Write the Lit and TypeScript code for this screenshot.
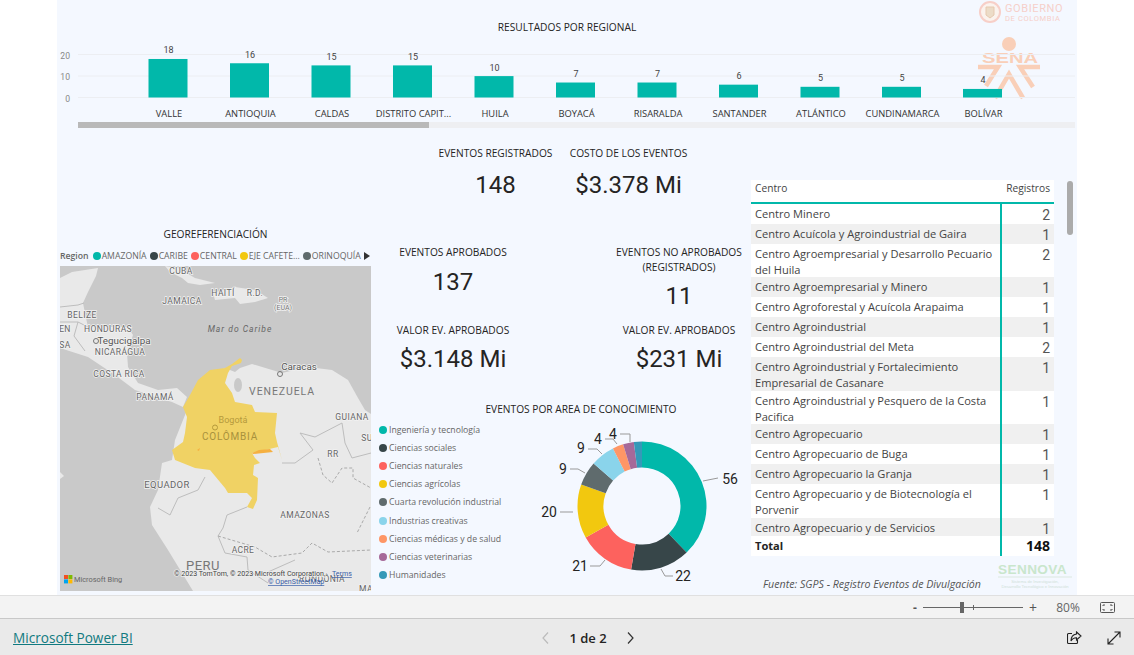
import { LitElement, html, css, svg } from 'lit';
import { customElement } from 'lit/decorators.js';

const REGIONALES: [string, number, number][] = [
  ['VALLE', 18, 168], ['ANTIOQUIA', 16, 249.5], ['CALDAS', 15, 331], ['DISTRITO CAPIT...', 15, 412.5],
  ['HUILA', 10, 494], ['BOYACÁ', 7, 575.5], ['RISARALDA', 7, 657], ['SANTANDER', 6, 738.5],
  ['ATLÁNTICO', 5, 820], ['CUNDINAMARCA', 5, 901.5], ['BOLÍVAR', 4, 982.5],
];

const AREAS: [string, number, string][] = [
  ['Ingeniería y tecnología', 56, '#01b8aa'], ['Ciencias sociales', 22, '#374649'],
  ['Ciencias naturales', 21, '#fd625e'], ['Ciencias agrícolas', 20, '#f2c80f'],
  ['Cuarta revolución industrial', 9, '#5f6b6d'], ['Industrias creativas', 9, '#8ad4eb'],
  ['Ciencias médicas y de salud', 4, '#fe9666'], ['Ciencias veterinarias', 4, '#a66999'],
  ['Humanidades', 3, '#3599b8'],
];

// etiquetas del donut: texto, x, y, guia
const DONUT_LABELS: [string, number, number, string][] = [
  ['56', 730, 478, '703,480 718,477'], ['22', 683, 575, '661,568 665,575 673,575'],
  ['21', 580, 565, '605,559 600,565 590,565'], ['20', 549, 511, '573,511 560,511'],
  ['9', 563, 468, '585,472 578,468 570,468'], ['9', 581, 447, '602,453 597,448 588,448'],
  ['4', 598, 438, '617,443 613,438 605,438'], ['4', 613, 433, '630,441 630,433 620,433'],
];

const CENTROS: [string[], number, number][] = [
  [['Centro Minero'], 2, 20],
  [['Centro Acuícola y Agroindustrial de Gaira'], 1, 20],
  [['Centro Agroempresarial y Desarrollo Pecuario', 'del Huila'], 2, 33],
  [['Centro Agroempresarial y Minero'], 1, 20],
  [['Centro Agroforestal y Acuícola Arapaima'], 1, 20],
  [['Centro Agroindustrial'], 1, 20],
  [['Centro Agroindustrial del Meta'], 2, 20],
  [['Centro Agroindustrial y Fortalecimiento', 'Empresarial de Casanare'], 1, 34],
  [['Centro Agroindustrial y Pesquero de la Costa', 'Pacifica'], 1, 33],
  [['Centro Agropecuario'], 1, 20],
  [['Centro Agropecuario de Buga'], 1, 20],
  [['Centro Agropecuario la Granja'], 1, 20],
  [['Centro Agropecuario y de Biotecnología el', 'Porvenir'], 1, 34],
  [['Centro Agropecuario y de Servicios'], 1, 18],
];

const MAP_LABELS: [string, number, number, string][] = [
  ['CUBA', 181, 271, 'm'], ['HAITÍ', 223, 293, 'm'], ['R.D.', 255, 293, 'm'], ['JAMAICA', 182, 301, 'm'],
  ['PR', 283, 299, 's'], ['(EUA)', 283, 307, 's'], ['BELIZE', 82, 315, 'm'], ['HONDURAS', 108, 329, 'm'],
  ['EN', 65, 329, 'm'], ['SA', 65, 345, 'm'], ['NICARÁGUA', 120, 352, 'm'], ['COSTA RICA', 119, 374, 'm'],
  ['PANAMÁ', 155, 397, 'm'], ['GUIANA', 352, 417, 'm'], ['SU', 367, 438, 'm'], ['RR', 333, 454, 'm'],
  ['EQUADOR', 167, 485, 'l'], ['AMAZONAS', 305, 515, 'm'], ['ACRE', 243, 550, 'm'], ['RONDÔNIA', 322, 579, 'm'],
  ['MA', 366, 589, 'm'], ['VENEZUELA', 282, 392, 'xl'], ['PERU', 203, 567, 'xxl'], ['Caracas', 299, 367, 'c'],
  ['Tegucigalpa', 124, 341, 'c'],
];

const COLOMBIA = '242,360 241,363 232,366 228,373 225,383 232,393 235,402 252,405 255,412 277,413 275,433 277,442 282,460 278,447 252,453 255,458 260,463 254,465 253,475 258,478 257,500 253,509 247,507 252,498 247,493 228,493 225,488 210,470 195,468 175,460 172,450 183,442 185,433 187,417 183,407 190,395 198,380 210,370 225,368 232,364 240,358';
const CENTROAMERICA = '60,278 72,272 85,270 98,268 96,276 88,292 83,303 86,318 88,327 128,327 133,335 127,353 128,367 138,383 158,390 177,388 187,397 183,407 172,402 155,397 135,390 115,375 88,357 60,348';
const SURAMERICA = '225,368 235,372 240,368 252,364 282,373 308,367 332,370 348,380 358,398 365,410 371,414 371,591 193,591 168,550 152,525 150,507 158,490 162,463 172,460 175,440 187,410 200,380';

function arc(cx: number, cy: number, r0: number, r1: number, a0: number, a1: number) {
  const p = (r: number, a: number) => `${(cx + r * Math.sin(a)).toFixed(2)} ${(cy - r * Math.cos(a)).toFixed(2)}`;
  const big = a1 - a0 > Math.PI ? 1 : 0;
  return `M${p(r1, a0)}A${r1} ${r1} 0 ${big} 1 ${p(r1, a1)}L${p(r0, a1)}A${r0} ${r0} 0 ${big} 0 ${p(r0, a0)}Z`;
}

@customElement('app-root')
export class AppRoot extends LitElement {
  static styles = css`
    :host {
      display: flex;
      flex-direction: column;
      width: 1134px;
      height: 655px;
      overflow: hidden;
      background: #fff;
      font-family: 'Open Sans', 'Noto Sans', sans-serif;
      color: #252423;
    }
    svg { display: block; }
    .canvas {
      width: 1020px;
      height: 595px;
      margin-left: 57px;
      background: #f4f8ff;
      flex: none;
      position: relative;
    }
    .chart-title { font-size: 10.2px; fill: #252423; text-anchor: middle; }
    .chart-cat { font-size: 9.35px; fill: #333; text-anchor: middle; }
    .chart-val { font-size: 9px; fill: #444; text-anchor: middle; font-family: Roboto, sans-serif; }
    .chart-axis { font-size: 8.6px; fill: #888; text-anchor: end; font-family: Roboto, sans-serif; }
    .gob { font-size: 11px; fill: #f6cfc9; letter-spacing: .6px; font-family: Roboto, sans-serif; }
    .gob2 { font-size: 7.6px; fill: #f6cfc9; letter-spacing: .6px; font-family: Roboto, sans-serif; }
    .sena { font-size: 14px; font-weight: 700; fill: #f9cfb8; font-family: 'Liberation Sans', sans-serif; }
    .hscroll { margin-left: 21px; width: 997px; height: 6px; background: #eeeff2; }
    .hscroll div { width: 351px; height: 6px; background: #b9b9b9; }

    .body {
      display: grid;
      grid-template-columns: 311px 380px 303px;
      margin-left: 3px;
      height: 467px;
    }
    .geo { display: flex; flex-direction: column; padding-top: 99px; }
    .geo-title { font-size: 10.2px; text-align: center; line-height: 14px; }
    .geo-legend {
      display: flex;
      align-items: center;
      height: 15px;
      margin-top: 7px;
      margin-bottom: 3px;
      font-size: 8.7px;
      color: #666;
      white-space: nowrap;
    }
    .geo-legend b { font-weight: 600; margin-right: 1px; }
    .geo-legend i { width: 8px; height: 8px; border-radius: 50%; margin: 0 1px 0 3px; flex: none; }
    .geo-legend em { font-style: normal; width: 0; height: 0; margin-left: 3px; border: 4px solid transparent; border-left: 6px solid #333; border-right: 0; }
    .m { font: 8.5px Roboto, sans-serif; letter-spacing: .4px; fill: #666; text-anchor: middle; paint-order: stroke; stroke: #f2f2f2; stroke-width: 1.5px; }
    .s { font: 7px Roboto, sans-serif; fill: #777; text-anchor: middle; paint-order: stroke; stroke: #f2f2f2; stroke-width: 1.5px; }
    .l { font: 9.5px Roboto, sans-serif; letter-spacing: .4px; fill: #666; text-anchor: middle; paint-order: stroke; stroke: #f2f2f2; stroke-width: 1.5px; }
    .xl { font: 10.5px Roboto, sans-serif; letter-spacing: .9px; fill: #777; text-anchor: middle; }
    .xxl { font: 13px Roboto, sans-serif; letter-spacing: .5px; fill: #777; text-anchor: middle; }
    .c { font: 9.8px Roboto, sans-serif; fill: #555; text-anchor: middle; paint-order: stroke; stroke: #f2f2f2; stroke-width: 1.5px; }
    .sea-name { font: italic 8.5px Roboto, sans-serif; letter-spacing: 1px; fill: #666; text-anchor: middle; }
    .col-name { font: 9px Roboto, sans-serif; fill: #b59a3c; text-anchor: middle; }
    .col-big { font: 10px Roboto, sans-serif; letter-spacing: .8px; fill: #a8913c; text-anchor: middle; }
    .attr { font: 7.05px Roboto, sans-serif; fill: #444; paint-order: stroke; stroke: #eee; stroke-width: 1.5px; }
    .attr-link { font: 7.05px Roboto, sans-serif; fill: #3a5fa8; text-decoration: underline; }
    .bing { font: 7.4px Roboto, sans-serif; fill: #666; }

    .mid { display: flex; flex-direction: column; padding-top: 18px; }
    .kpi { text-align: center; }
    .kpi-label { font-size: 10.2px; line-height: 15px; color: #252423; }
    .kpi-value { font: 24px/30px Roboto, sans-serif; color: #252423; }
    .kpis-top { display: grid; grid-template-columns: 133px 133px; justify-content: center; padding-left: 2px; height: 99px; }
    .kpis-top .kpi-value { margin-top: 9px; }
    .kpis { display: grid; grid-template-columns: 164px 1fr 144px; }
    .kpis.a { height: 78px; }
    .kpis.a .kpi-value { margin-top: 7px; }
    .kpis.a .two .kpi-value { margin-top: 6px; }
    .kpis.b { height: 79px; }
    .kpis.b .kpi-value { margin-top: 6px; }
    .donut-title { font-size: 10.2px; line-height: 14px; text-align: center; padding-left: 40px; }
    .donut-row { display: flex; align-items: flex-start; }
    .donut-row svg { margin-top: 5px; }
    .donut-legend { list-style: none; margin: 5px 0 0 8px; padding: 0; width: 151px; flex: none; }
    .donut-legend li { display: flex; align-items: center; height: 18.1px; font-size: 8.7px; color: #666; white-space: nowrap; }
    .donut-legend i { width: 8px; height: 8px; border-radius: 50%; margin-right: 2px; flex: none; }
    .donut-num { font: 14px Roboto, sans-serif; fill: #252423; text-anchor: middle; dominant-baseline: central; }

    .right { display: flex; flex-direction: column; padding-top: 52px; }
    .table { width: 303px; background: #fff; font-size: 11.1px; color: #444; }
    .thead { display: flex; justify-content: space-between; height: 21px; padding: 1px 4px 0; border-bottom: 2px solid #01b8aa; font-size: 10.2px; line-height: 14px; }
    .tr { display: grid; grid-template-columns: 249px 2px 1fr; overflow: hidden; }
    .tr.alt { background: #f0f0f0; }
    .tr.plain { background: #fff; }
    .td { padding: 2px 0 0 4px; line-height: 16px; white-space: nowrap; }
    .rule { background: #01b8aa; }
    .num { font: 14px/18px Roboto, sans-serif; color: #555; text-align: right; padding: 2px 4px 0 0; }
    .total { font-weight: 700; color: #252423; }
    .total .num { font: 700 14px/18px 'Open Sans', sans-serif; color: #111; padding-top: 1px; }
    .source { font-size: 10.65px; font-style: italic; color: #555; margin: 21px 0 0 12px; white-space: nowrap; }
    .vscroll { position: absolute; left: 1010px; top: 181px; width: 6px; height: 54px; background: #ababab; border-radius: 3px; }
    .sennova { position: absolute; left: 941px; top: 559px; }
    .sen { font: 700 13.6px 'Liberation Sans', sans-serif; fill: #c9e6cc; letter-spacing: .4px; }
    .sen2 { font: 4.2px 'Liberation Sans', sans-serif; fill: #cfe0d8; text-anchor: middle; }

    .toolbar {
      flex: none;
      height: 22px;
      box-sizing: content-box;
      background: #f3f3f3;
      border-top: 1px solid #e0e0e0;
      border-bottom: 1px solid #c8c8c8;
      display: flex;
      align-items: center;
      justify-content: flex-end;
      padding-right: 19px;
      color: #555;
      font-size: 12px;
    }
    .tb-minus { font-weight: 700; width: 8px; }
    .slider { position: relative; width: 100px; height: 1px; background: #666; margin: 0 6px 0 2px; }
    .slider .thumb { position: absolute; left: 37px; top: -5px; width: 4px; height: 11px; background: #666; }
    .slider .tick { position: absolute; left: 50px; top: -2px; width: 1px; height: 5px; background: #666; }
    .tb-plus { font-size: 14px; width: 16px; color: #555; }
    .zoom-pct { width: 30px; margin: 0 17px 0 8px; text-align: center; font-size: 12px; color: #666; }

    .footer {
      flex: 1;
      background: #eaeaea;
      display: grid;
      grid-template-columns: 540px 96px 1fr;
      align-items: center;
      padding-top: 1px;
      font-size: 14px;
    }
    .pbi { margin-left: 13px; color: #117a80; text-decoration: underline; font-size: 13.6px; }
    .pager { display: flex; align-items: center; justify-content: space-between; font-weight: 600; font-size: 13px; color: #252423; }
    .actions { display: flex; justify-content: flex-end; gap: 25px; padding-right: 13px; }
  `;

  private chart() {
    const base = 97.5, unit = 2.14;
    return html`<svg width="1020" height="122" viewBox="57 0 1020 122">
      <text class="chart-title" x="567" y="31">RESULTADOS POR REGIONAL</text>
      <circle cx="990" cy="12" r="10" fill="#fbf3ee" stroke="#f7cfc8" stroke-width="2"></circle>
      <path d="M986 7h8v8l-4 3-4-3z" fill="#ecdcc8" stroke="#e6c9b0"></path>
      <text class="gob" x="1005" y="12">GOBIERNO</text>
      <text class="gob2" x="1005" y="21">DE COLOMBIA</text>
      <circle cx="1009" cy="44" r="7" fill="#f9cfb8"></circle>
      <text class="sena" x="982" y="63" textLength="56" lengthAdjust="spacingAndGlyphs">SENA</text>
      <g fill="none" stroke="#f9cfb8" stroke-width="4.5">
        <path d="M978 67h20l-12 19M1040 67h-20l13 20"></path>
        <path d="M995 98l14-24 14 24"></path>
      </g>
      ${[54.5, 76, 97.5].map(y => svg`<line x1="78" x2="1075" y1=${y} y2=${y} stroke="#eceef2"></line>`)}
      <text class="chart-axis" x="70" y="59">20</text>
      <text class="chart-axis" x="70" y="80">10</text>
      <text class="chart-axis" x="70" y="102">0</text>
      ${REGIONALES.map(([name, v, cx]) => {
        const h = v * unit;
        return svg`
          <rect x=${cx - 19.5} y=${base - h} width="39" height=${h} fill="#01b8aa"></rect>
          <text class="chart-val" x=${cx + 0.5} y=${base - h - 5.5}>${v}</text>
          <text class="chart-cat" x=${cx + 1} y="117">${name}</text>`;
      })}
    </svg>`;
  }

  private map() {
    return html`<svg width="311" height="325" viewBox="60 266 311 325">
      <rect x="60" y="266" width="311" height="325" fill="#c9c9c9"></rect>
      <g fill="#e9e9e9">
        <polygon points=${CENTROAMERICA}></polygon>
        <polygon points=${SURAMERICA}></polygon>
        <polygon points="165,266 178,268 195,278 215,283 200,285 188,283 182,278 170,272"></polygon>
        <polygon points="213,293 235,287 255,290 268,298 255,302 240,304 235,298 215,300"></polygon>
        <polygon points="178,300 188,299 194,302 186,303"></polygon>
        <polygon points="278,297 288,297 289,299 279,300"></polygon>
        <polygon points="60,472 64,476 60,479"></polygon>
      </g>
      <ellipse cx="238" cy="385" rx="4" ry="7" fill="#c9c9c9"></ellipse>
      <g fill="none" stroke="#bdbdbd">
        <polyline points="60,307 78,305 84,303"></polyline>
        <polyline points="60,322 78,322 88,327"></polyline>
        <polyline points="78,322 74,336 85,351"></polyline>
        <polyline points="205,477 198,490 178,498 170,515 158,508"></polyline>
        <polyline points="247,507 227,515 223,528 218,536 225,553 247,557 248,570 268,583"></polyline>
        <polyline points="282,463 295,463 313,450 300,433 315,437 342,423 345,443 352,458 371,453"></polyline>
        <polyline points="295,560 268,572"></polyline>
      </g>
      <g fill="none" stroke="#a9a9a9" stroke-dasharray="3 2">
        <polyline points="218,536 255,547 272,557 302,553 312,543 328,552 371,550"></polyline>
        <polyline points="318,458 323,475 332,483 342,468 353,468 353,478 371,488"></polyline>
        <polyline points="370,507 357,533"></polyline>
      </g>
      <polygon points=${COLOMBIA} fill="#f0d264"></polygon>
      <path d="M252 453l7-3 11-1 3 3-20 2z" fill="#f5b041"></path>
      <path d="M197 450l3-2-1 3z" fill="#f5b041"></path>
      ${MAP_LABELS.map(([t, x, y, c]) => svg`<text class=${c} x=${x} y=${y + 3}>${t}</text>`)}
      <text class="sea-name" x="240" y="332">Mar do Caribe</text>
      <text class="col-name" x="233" y="423">Bogotá</text>
      <text class="col-big" x="230" y="440">COLÔMBIA</text>
      <circle cx="215" cy="427.5" r="2.5" fill="none" stroke="#b59a3c"></circle>
      <circle cx="96" cy="341" r="2.5" fill="none" stroke="#777"></circle>
      <circle cx="280" cy="374" r="2.5" fill="none" stroke="#777"></circle>
      <text class="attr" x="174" y="576">© 2023 TomTom, © 2023 Microsoft Corporation,</text>
      <text class="attr-link" x="332" y="576">Terms</text>
      <text class="attr-link" x="268" y="584">© OpenStreetMap</text>
      <rect x="64" y="575" width="4" height="4" fill="#f25022"></rect>
      <rect x="68.4" y="575" width="4" height="4" fill="#7fba00"></rect>
      <rect x="64" y="579.4" width="4" height="4" fill="#00a4ef"></rect>
      <rect x="68.4" y="579.4" width="4" height="4" fill="#ffb900"></rect>
      <text class="bing" x="74" y="582">Microsoft Bing</text>
    </svg>`;
  }

  private donut() {
    const total = AREAS.reduce((s, a) => s + a[1], 0);
    let acc = 0;
    return html`<svg width="220" height="170" viewBox="530 420 220 170">
      ${AREAS.map(([, v, color]) => {
        const a0 = (acc / total) * Math.PI * 2;
        acc += v;
        const a1 = (acc / total) * Math.PI * 2;
        return svg`<path d=${arc(642, 505, 38.5, 64.5, a0, a1)} fill=${color}></path>`;
      })}
      ${DONUT_LABELS.map(([t, x, y, pts]) => svg`
        <polyline points=${pts} fill="none" stroke="#999"></polyline>
        <text class="donut-num" x=${x} y=${y}>${t}</text>`)}
    </svg>`;
  }

  render() {
    const legend: [string, string][] = [['AMAZONÍA', '#01b8aa'], ['CARIBE', '#374649'], ['CENTRAL', '#fd625e'], ['EJE CAFETE...', '#f2c80f'], ['ORINOQUÍA', '#5f6b6d']];
    return html`
      <div class="canvas">
        ${this.chart()}
        <div class="hscroll"><div></div></div>
        <div class="body">
          <section class="geo">
            <div class="geo-title">GEOREFERENCIACIÓN</div>
            <div class="geo-legend">
              <b>Region</b>
              ${legend.map(([t, c]) => html`<i style="background:${c}"></i><span>${t}</span>`)}
              <em></em>
            </div>
            ${this.map()}
          </section>
          <section class="mid">
            <div class="kpis-top">
              <div class="kpi"><div class="kpi-label">EVENTOS REGISTRADOS</div><div class="kpi-value">148</div></div>
              <div class="kpi"><div class="kpi-label">COSTO DE LOS EVENTOS</div><div class="kpi-value">$3.378 Mi</div></div>
            </div>
            <div class="kpis a">
              <div class="kpi"><div class="kpi-label">EVENTOS APROBADOS</div><div class="kpi-value">137</div></div>
              <div></div>
              <div class="kpi two"><div class="kpi-label">EVENTOS NO APROBADOS<br />(REGISTRADOS)</div><div class="kpi-value">11</div></div>
            </div>
            <div class="kpis b">
              <div class="kpi"><div class="kpi-label">VALOR EV. APROBADOS</div><div class="kpi-value">$3.148 Mi</div></div>
              <div></div>
              <div class="kpi"><div class="kpi-label">VALOR EV. APROBADOS</div><div class="kpi-value">$231 Mi</div></div>
            </div>
            <div class="donut-title">EVENTOS POR AREA DE CONOCIMIENTO</div>
            <div class="donut-row">
              <ul class="donut-legend">
                ${AREAS.map(([t, , c]) => html`<li><i style="background:${c}"></i>${t}</li>`)}
              </ul>
              ${this.donut()}
            </div>
          </section>
          <section class="right">
            <div class="table">
              <div class="thead"><span>Centro</span><span>Registros</span></div>
              ${CENTROS.map(([lines, v, h], i) => html`
                <div class="tr ${i % 2 ? 'alt' : 'plain'}" style="height:${h}px">
                  <div class="td">${lines.map((l, j) => html`${j ? html`<br />` : ''}${l}`)}</div>
                  <div class="rule"></div>
                  <div class="num">${v}</div>
                </div>`)}
              <div class="tr plain total" style="height:20px">
                <div class="td">Total</div>
                <div class="rule"></div>
                <div class="num">148</div>
              </div>
            </div>
            <div class="source">Fuente: SGPS - Registro Eventos de Divulgación</div>
          </section>
        </div>
        <div class="vscroll"></div>
        <svg class="sennova" width="76" height="32" viewBox="0 0 76 32">
          <text class="sen" x="0" y="15">SENNOVA</text>
          <line x1="0" x2="74" y1="18" y2="18" stroke="#dbe8e0"></line>
          <text class="sen2" x="37" y="24">Sistema de Investigación,</text>
          <text class="sen2" x="37" y="29">Desarrollo Tecnológico e Innovación</text>
        </svg>
      </div>
      <div class="toolbar">
        <span class="tb-minus">-</span>
        <div class="slider"><div class="thumb"></div><div class="tick"></div></div>
        <span class="tb-plus">+</span>
        <span class="zoom-pct">80%</span>
        <svg width="15" height="11" viewBox="0 0 15 11" fill="none" stroke="#555">
          <rect x=".5" y=".5" width="14" height="10" rx="1"></rect>
          <path d="M3 4V3h2M10 3h2v1M12 7v1h-2M5 8H3V7"></path>
        </svg>
      </div>
      <div class="footer">
        <a class="pbi">Microsoft Power BI</a>
        <div class="pager">
          <svg width="10" height="14" viewBox="0 0 10 14" fill="none" stroke="#bbb" stroke-width="1.2"><path d="M8 1.5L3 7l5 5.5"></path></svg>
          <span>1 de 2</span>
          <svg width="10" height="14" viewBox="0 0 10 14" fill="none" stroke="#333" stroke-width="1.2"><path d="M2 1.5L7 7l-5 5.5"></path></svg>
        </div>
        <div class="actions">
          <svg width="15" height="14" viewBox="0 0 15 14" fill="none" stroke="#222" stroke-width="1.1">
            <path d="M5 2.5H1.5a1 1 0 0 0-1 1v8a1 1 0 0 0 1 1h8a1 1 0 0 0 1-1V9"></path>
            <path d="M9.5 1l4.5 4-4.5 4V6.8C7 6.8 5 8 4 10c0-4 2-6.5 5.5-7z"></path>
          </svg>
          <svg width="14" height="14" viewBox="0 0 14 14" fill="none" stroke="#222" stroke-width="1.1">
            <path d="M1 13L13 1M7.5 1H13v5.5M1 7.5V13h5.5"></path>
          </svg>
        </div>
      </div>
    `;
  }
}
